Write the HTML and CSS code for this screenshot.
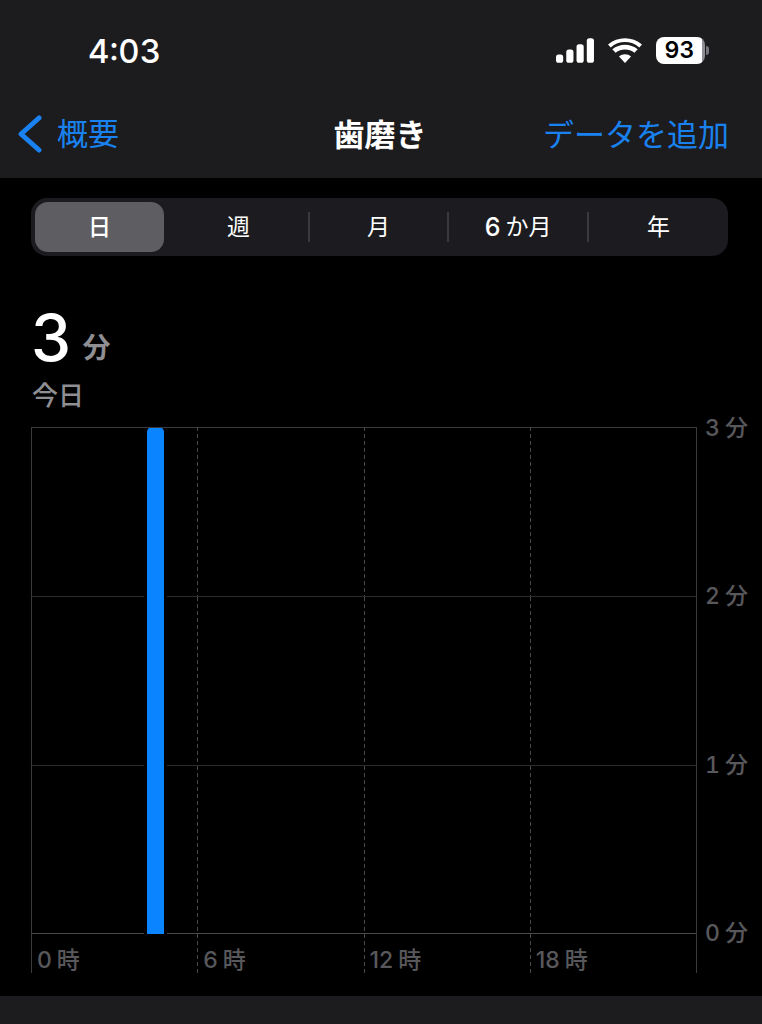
FILE: index.html
```html
<!DOCTYPE html>
<html lang="ja">
<head>
<meta charset="utf-8">
<title>歯磨き</title>
<link rel="stylesheet" href="styles.css">
</head>
<body>
<header class="top">
  <div class="status">
    <span class="time">4:03</span>
    <div class="status-icons">
      <svg class="signal" width="39" height="25" viewBox="0 0 38 24"><rect x="0" y="16" width="7" height="8" rx="2.500"/><rect x="10" y="11" width="7" height="13" rx="2.500"/><rect x="20" y="6" width="7" height="18" rx="2.500"/><rect x="30" y="0" width="7" height="24" rx="2.500"/></svg>
      <svg class="wifi" width="34" height="25" viewBox="0 0 34 25"><path d="M17 25l-6-6.600c3.400-2.800 8.600-2.800 12 0z"/><path d="M7.600 14.800l-3.300-3.600c7.300-6 18.100-6 25.400 0l-3.300 3.600c-5.400-4.400-13.400-4.400-18.800 0z"/><path d="M2.700 9.400L0 6.500C9.700-2 24.300-2 34 6.500l-2.700 2.900c-8.200-7.100-20.400-7.100-28.600 0z"/></svg>
      <div class="battery"><span class="battery-body">93</span><span class="battery-tip"></span></div>
    </div>
  </div>
  <nav class="nav">
    <a class="back">
      <svg width="26" height="38" viewBox="0 0 26 38"><path d="M22 3L4 19l18 16" fill="none" stroke="#1a82f0" stroke-width="5" stroke-linecap="round" stroke-linejoin="round"/></svg>
      <span>概要</span>
    </a>
    <h1 class="title">歯磨き</h1>
    <a class="add">データを追加</a>
  </nav>
</header>
<main class="main">
  <div class="segments">
    <span class="seg seg-on">日</span>
    <span class="seg">週</span>
    <span class="seg seg-line">月</span>
    <span class="seg seg-line"><b class="six">6</b><i class="gap"></i>か月</span>
    <span class="seg seg-line">年</span>
  </div>
  <div class="summary">
    <div class="value"><span class="num">3</span><span class="unit">分</span></div>
    <div class="day">今日</div>
  </div>
  <div class="chart">
    <div class="plot">
      <div class="cell"></div><div class="cell"></div><div class="cell"></div><div class="cell"></div>
      <div class="cell"></div><div class="cell"></div><div class="cell"></div><div class="cell"></div>
      <div class="cell"></div><div class="cell"></div><div class="cell"></div><div class="cell"></div>
      <div class="xlabel">0<i class="gap"></i>時</div><div class="xlabel">6<i class="gap"></i>時</div><div class="xlabel">12<i class="gap"></i>時</div><div class="xlabel">18<i class="gap"></i>時</div>
      <div class="bar"></div>
    </div>
    <div class="yaxis">
      <span>3<i class="gap"></i>分</span>
      <span>2<i class="gap"></i>分</span>
      <span>1<i class="gap"></i>分</span>
      <span>0<i class="gap"></i>分</span>
    </div>
  </div>
</main>
<footer class="bottom"></footer>
</body>
</html>
```
FILE: styles.css
```css
* { box-sizing: border-box; }
html, body { margin: 0; height: 1024px; overflow: hidden; background: #000; }
body {
  width: 762px;
  display: flex;
  flex-direction: column;
  font-family: Inter, "Noto Sans CJK JP", sans-serif;
  font-variant-numeric: tabular-nums;
  color: #fff;
}
i { font-style: normal; }
.gap { display: inline-block; width: 5px; }

.top { height: 178px; background: #1c1c1e; flex: none; }
.status { height: 100px; display: flex; justify-content: space-between; align-items: flex-start; padding: 30px 53px 0 88px; }
.time { font-size: 33px; line-height: 42px; font-weight: 500; }
.status-icons { display: flex; align-items: center; gap: 13px; padding-top: 7px; }
.signal, .wifi { fill: #fff; display: block; }
.wifi { margin-right: 1px; }
.battery { display: flex; align-items: center; gap: 1px; }
.battery-body {
  width: 49px; height: 27px; border-radius: 8px;
  background: linear-gradient(90deg, #fff 0 93%, #8e8e93 93%);
  color: #000; font-size: 23px; font-weight: 600; line-height: 27px; text-align: center; padding-right: 2px;
}
.battery-tip { width: 3px; height: 9px; background: #77777b; border-radius: 0 3px 3px 0; }

.nav { height: 78px; display: flex; align-items: flex-start; justify-content: space-between; position: relative; padding: 10px 33px 0 17px; }
.back { display: flex; align-items: center; gap: 14px; color: #1a82f0; font-size: 31px; line-height: 48px; }
.add { color: #1a82f0; font-size: 31px; line-height: 48px; margin-top: 1px; }
.title { position: absolute; left: 0; right: 0; top: 11px; margin: 0; padding-right: 2px; text-align: center; font-size: 31px; line-height: 48px; font-weight: 700; }

.main { flex: 1; padding: 20px 34px 0 30px; }
.segments {
  display: grid; grid-template-columns: 134px 139px 139px 140px 1fr;
  height: 58px; margin-left: 1px; padding: 4px 0 4px 4px; background: #1c1c20; border-radius: 16px;
}
.seg { display: flex; align-items: center; justify-content: center; font-size: 23px; line-height: 50px; position: relative; }
.seg-on { background: #5e5e62; border-radius: 13px; width: 129px; font-weight: 500; }
.seg-line { padding-left: 2px; }
.seg-line::before { content: ""; position: absolute; left: 0; top: 10px; height: 30px; width: 2px; background: #3a3a3c; }
.six { font-size: 25px; font-weight: 500; }

.summary { padding: 49px 0 0 1px; }
.value { display: flex; align-items: flex-start; height: 66px; }
.num { font-size: 64px; line-height: 66px; font-weight: 500; }
.unit { font-size: 28px; font-weight: 700; color: #8e8e93; margin: 23px 0 0 10px; line-height: 40px; }
.day { font-size: 26px; line-height: 40px; font-weight: 500; color: #8e8e93; margin: 5px 0 0 1px; }

.chart { display: flex; margin: 11px 0 0 1px; width: 731px; }
.plot {
  flex: none;
  position: relative; width: 666px; height: 546px;
  display: grid; grid-template-columns: repeat(4, 1fr); grid-template-rows: 170px 169px 168px 39px;
  border-right: 1px solid #3a3a3c;
  background: linear-gradient(#3a3a3c, #3a3a3c) 0 0 / 100% 1px no-repeat;
}
.cell {
  border-bottom: 1px solid #2c2c2e;
  background: repeating-linear-gradient(#48484a 0 4px, transparent 4px 7px) 0 0 / 1px 100% no-repeat;
}
.cell:nth-child(4n+1) { background: linear-gradient(#3a3a3c, #3a3a3c) 0 0 / 1px 100% no-repeat; }
.cell:nth-child(n+9) { border-bottom-color: #48484a; }
.xlabel {
  padding: 10px 0 0 6px; font-size: 23px; line-height: 32px; font-weight: 500; color: #58585c;
  font-variant-numeric: normal;
  background: repeating-linear-gradient(#48484a 0 4px, transparent 4px 7px) 0 0 / 1px 100% no-repeat;
}
.xlabel:nth-child(13) { background: linear-gradient(#3a3a3c, #3a3a3c) 0 0 / 1px 100% no-repeat; }
.bar {
  position: absolute; left: 116px; top: 0; width: 17px; height: 507px;
  background: #0a84ff; border-radius: 5px 5px 0 0;
  box-shadow: 0 0 0 3px #000;
  clip-path: inset(1px -3px 0 -3px);
}
.yaxis { flex: none; display: flex; flex-direction: column; justify-content: space-between; height: 507px; margin: 0 0 0 8px; }
.yaxis span { font-size: 23px; line-height: 32px; height: 1px; display: flex; align-items: center; font-weight: 500; color: #58585c; white-space: nowrap; }

.bottom { flex: none; height: 28px; background: #1c1c1e; }
```
